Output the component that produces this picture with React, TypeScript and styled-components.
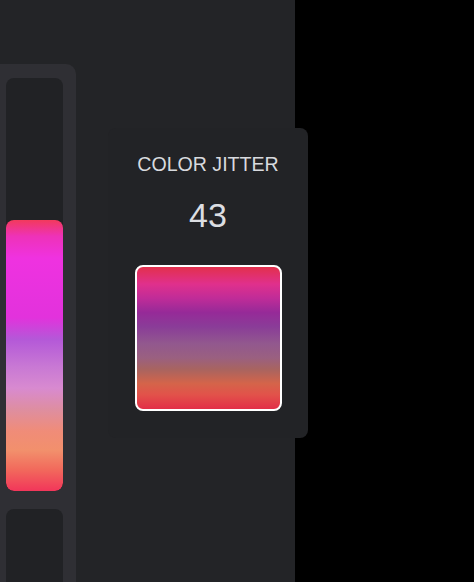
import React from 'react';
import styled, { createGlobalStyle } from 'styled-components';

const GlobalStyle = createGlobalStyle`
  html, body {
    margin: 0;
    padding: 0;
    background: #000;
    height: 100%;
    overflow: hidden;
  }
  #root {
    height: 100%;
  }
`;

const Page = styled.div`
  position: relative;
  height: 582px;
  width: 474px;
  background: #000;
  font-family: "Liberation Sans", Arial, sans-serif;
`;

const Panel = styled.div`
  width: 295px;
  height: 100%;
  background: #232427;
  display: flex;
  padding-top: 64px;
  box-sizing: border-box;
  overflow: hidden;
`;

const SliderCard = styled.div`
  width: 90px;
  margin-left: -14px;
  background: #2f2f34;
  border-radius: 10px 10px 0 0;
  padding: 14px 13px 0 20px;
  box-sizing: border-box;
  display: flex;
  flex-direction: column;
  gap: 18px;
`;

const Track = styled.div<{ $h: number }>`
  height: ${p => p.$h}px;
  flex-shrink: 0;
  background: #212225;
  border-radius: 8px;
  display: flex;
  flex-direction: column;
  justify-content: flex-end;
  overflow: hidden;
`;

const Fill = styled.div`
  border-radius: 8px;
  background: linear-gradient(
    to bottom,
    #f23a5c 0%,
    #ee32b8 6%,
    #ef32e0 14%,
    #e232dc 36%,
    #b458d8 44%,
    #c878d4 54%,
    #d88ad0 62%,
    #de8ea0 70%,
    #f08c78 78%,
    #f2906c 85%,
    #f26a5c 92%,
    #f2365a 100%
  );
`;

const Popover = styled.div`
  position: absolute;
  left: 108px;
  top: 128px;
  width: 200px;
  height: 310px;
  background: #222326;
  border-radius: 8px;
  display: flex;
  flex-direction: column;
  align-items: center;
  padding-top: 25px;
  box-sizing: border-box;
`;

const Title = styled.div`
  color: #d8dade;
  font-size: 19.6px;
  line-height: 22px;
`;

const Value = styled.div`
  margin-top: 20px;
  color: #dcdee2;
  font-size: 34px;
  line-height: 40px;
`;

const Swatch = styled.div`
  margin-top: 30px;
  width: 147px;
  height: 146px;
  box-sizing: border-box;
  border: 2px solid #fff;
  border-radius: 8px;
  background: linear-gradient(
    to bottom,
    #e2304c 0%,
    #e0308c 12%,
    #c02c98 22%,
    #962a98 32%,
    #8a3c98 42%,
    #92588e 54%,
    #9a6080 64%,
    #a86460 72%,
    #d4644a 82%,
    #e2524a 90%,
    #e22e48 100%
  );
`;

const App = () => {
  return (
    <Page>
      <GlobalStyle />
      <Panel>
        <SliderCard>
          <Track $h={413}>
            <Fill style={{ height: `${(271 / 413) * 100}%` }} />
          </Track>
          <Track $h={120} />
        </SliderCard>
      </Panel>
      <Popover>
        <Title>COLOR JITTER</Title>
        <Value>43</Value>
        <Swatch />
      </Popover>
    </Page>
  );
};

export default App;
